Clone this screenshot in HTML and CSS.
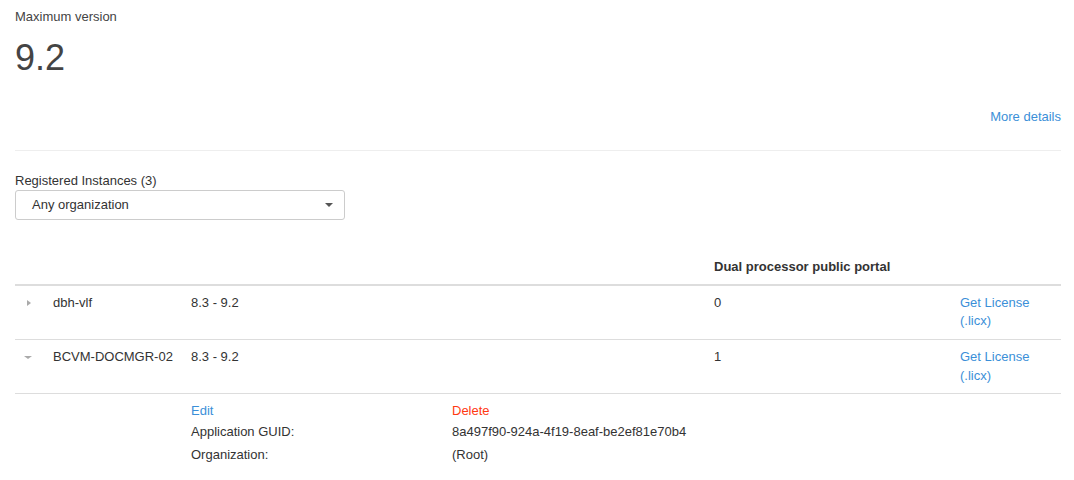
FILE: index.html
```html
<!DOCTYPE html>
<html lang="en">
<head>
<meta charset="UTF-8">
<meta name="viewport" content="width=device-width, initial-scale=1.0">
<title>Registered Instances</title>
<link rel="stylesheet" href="styles.css">
</head>
<body>
<div class="page">
    <div class="summary">
        <div class="summary-label">Maximum version</div>
        <div class="summary-value">9.2</div>
        <div class="summary-links"><a href="#" class="link">More details</a></div>
    </div>

    <div class="instances">
        <label class="field-label" for="org-filter">Registered Instances (3)</label>
        <div class="select-box" id="org-filter">
            <span class="select-text">Any organization</span>
            <span class="select-caret"></span>
        </div>

        <table class="instance-table">
            <colgroup>
                <col class="col-toggle">
                <col class="col-name">
                <col class="col-version">
                <col class="col-blank">
                <col class="col-portal">
                <col class="col-license">
            </colgroup>
            <thead>
                <tr>
                    <th></th>
                    <th></th>
                    <th></th>
                    <th></th>
                    <th>Dual processor public portal</th>
                    <th></th>
                </tr>
            </thead>
            <tbody>
                <tr>
                    <td><span class="toggle toggle-closed"></span></td>
                    <td>dbh-vlf</td>
                    <td>8.3 - 9.2</td>
                    <td></td>
                    <td>0</td>
                    <td><a href="#" class="link">Get License<br>(.licx)</a></td>
                </tr>
                <tr>
                    <td><span class="toggle toggle-open"></span></td>
                    <td>BCVM-DOCMGR-02</td>
                    <td>8.3 - 9.2</td>
                    <td></td>
                    <td>1</td>
                    <td><a href="#" class="link">Get License<br>(.licx)</a></td>
                </tr>
                <tr class="detail-row">
                    <td></td>
                    <td></td>
                    <td colspan="4">
                        <div class="detail-grid">
                            <a href="#" class="link">Edit</a>
                            <a href="#" class="link-danger">Delete</a>
                            <span>Application GUID:</span>
                            <span>8a497f90-924a-4f19-8eaf-be2ef81e70b4</span>
                            <span class="detail-gap">Organization:</span>
                            <span class="detail-gap">(Root)</span>
                        </div>
                    </td>
                </tr>
            </tbody>
        </table>
    </div>
</div>
</body>
</html>
```

FILE: styles.css
```css
body {
    font-family: "Liberation Sans", Arial, sans-serif;
    font-size: 13px;
    line-height: 1.42857;
    color: #333;
    margin: 0;
    background-color: #fff;
}
.page {
    padding: 8px 13px 0 15px;
}
.link {
    color: #3b8fd8;
    text-decoration: none;
}
.link-danger {
    color: #ff3a12;
    text-decoration: none;
}
.summary {
    border-bottom: 1px solid #eee;
    padding-bottom: 23px;
}
.summary-label {
    color: #444;
}
.summary-value {
    font-size: 36px;
    line-height: 1.1;
    color: #444;
    margin-top: 11px;
}
.summary-links {
    text-align: right;
    margin-top: 31px;
}
.instances {
    padding-top: 21px;
}
.field-label {
    display: block;
}
.select-box {
    width: 330px;
    height: 30px;
    box-sizing: border-box;
    border: 1px solid #ccc;
    border-radius: 3px;
    display: flex;
    align-items: center;
    justify-content: space-between;
    padding: 0 11px 0 16px;
}
.select-caret {
    width: 0;
    height: 0;
    border-left: 4px solid transparent;
    border-right: 4px solid transparent;
    border-top: 4px solid #555;
}
.instance-table {
    width: 100%;
    border-collapse: collapse;
    margin-top: 30px;
}
.col-toggle { width: 30px; }
.col-name { width: 138px; }
.col-version { width: 261px; }
.col-blank { width: 262px; }
.col-portal { width: 246px; }
.instance-table th,
.instance-table td {
    padding: 8px;
    text-align: left;
    vertical-align: top;
}
.instance-table th {
    font-weight: bold;
    border-bottom: 2px solid #ddd;
    padding-bottom: 7px;
}
.instance-table td {
    border-top: 1px solid #ddd;
}
.instance-table tbody tr:first-child td {
    border-top: none;
}
.toggle {
    display: inline-block;
    width: 0;
    height: 0;
    margin-left: 4px;
}
.toggle-closed {
    border-top: 3px solid transparent;
    border-bottom: 3px solid transparent;
    border-left: 4px solid #aaa;
    vertical-align: 1px;
}
.toggle-open {
    border-left: 4px solid transparent;
    border-right: 4px solid transparent;
    border-top: 3px solid #aaa;
    margin-left: 1px;
    vertical-align: 2px;
}
.detail-row td {
    border-top: 1px solid #ddd;
}
.detail-grid {
    display: grid;
    grid-template-columns: 261px 1fr;
    row-gap: 2px;
}
.detail-gap {
    margin-top: 3px;
}
```
